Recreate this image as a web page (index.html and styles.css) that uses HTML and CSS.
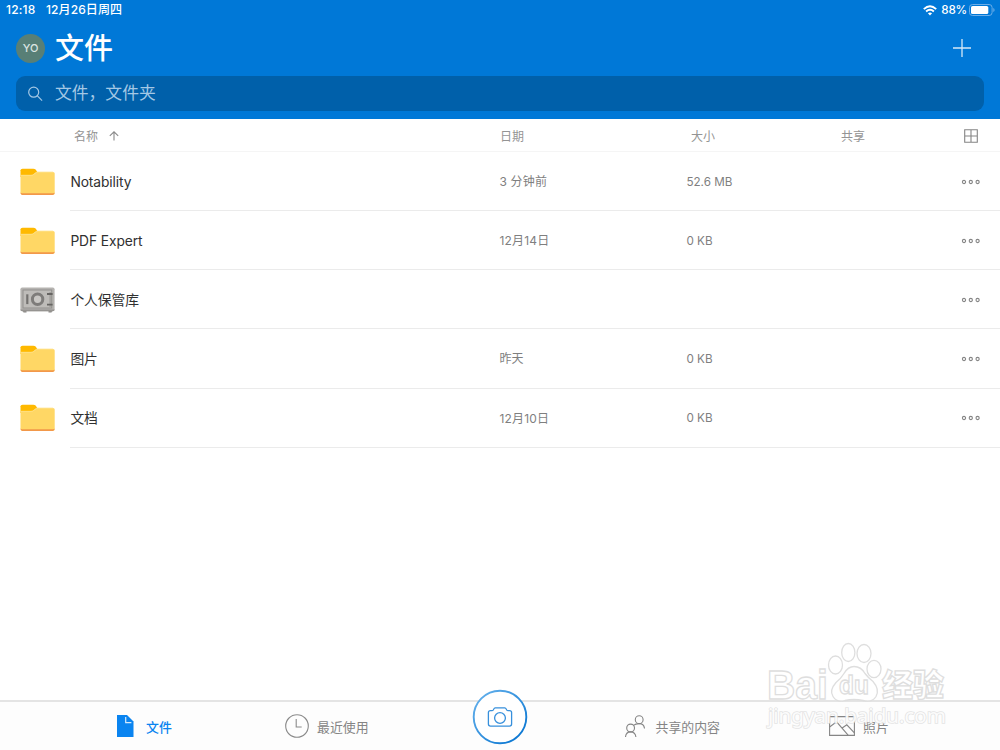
FILE: index.html
```html
<!DOCTYPE html>
<html lang="zh-CN">
<head>
    <meta charset="UTF-8">
    <meta name="viewport" content="width=device-width, initial-scale=1.0">
    <title>文件</title>
    <link rel="stylesheet" href="styles.css">
</head>
<body>
    <!-- Shared icons -->
    <svg class="symbols" width="0" height="0">
        <symbol id="folder" viewBox="0 0 36 28">
            <path d="M.5 3.2V9h13l4.5-4-2.2-3.2Q14.8.7 13.3.7H2.5Q.5.7.5 2.2z" fill="#ffb900"/>
            <path d="M.5 8.2Q.5 7.2 1.5 7.2H11q1.5 0 2.6-.9L16 4.6q.8-.6 2-.6h15q1.7 0 1.7 1.5V25q0 1.8-1.8 1.8H2.3Q.5 26.8.5 25z" fill="#ffd765"/>
            <path d="M.5 7.3H11q1.5 0 2.6-.9L16 4.6q.8-.6 2-.6h15" fill="none" stroke="#ffe69a" stroke-width=".8"/>
            <path d="M.5 24.5q.4.7 1.8.7h30.6q1.4 0 1.8-.7 0 2.4-1.8 2.4H2.300q-1.800 0-1.800-2.400z" fill="#f2984a"/>
        </symbol>
        <symbol id="more" viewBox="0 0 20 6">
            <g fill="none" stroke="#858585" stroke-width="1.1">
                <circle cx="3" cy="3" r="1.6"/>
                <circle cx="9.8" cy="3" r="1.6"/>
                <circle cx="16.6" cy="3" r="1.6"/>
            </g>
        </symbol>
    </svg>

    <!-- Header -->
    <header>
        <div class="status-bar">
            <span class="time">12:18</span>
            <span class="day">12月26日周四</span>
            <svg class="wifi" width="14" height="11" viewBox="0 0 14 11">
                <g fill="none" stroke="#fff" stroke-width="1.9">
                    <path d="M.8 4.100Q7-1.700 13.200 4.100"/>
                    <path d="M3.100 6.500Q7 3 10.900 6.500"/>
                </g>
                <path d="M4.900 8.300Q7 6.600 9.100 8.300L7 10.500z" fill="#fff"/>
            </svg>
            <span class="percent">88%</span>
            <svg width="26" height="12" viewBox="0 0 26 12">
                <rect x=".5" y=".5" width="22.6" height="11" rx="3" fill="none" stroke="#6caee8"/>
                <rect x="2" y="2" width="17.3" height="8" rx="1.6" fill="#fff"/>
                <path d="M24.300 4q1.300.6 1.300 2t-1.300 2z" fill="#6caee8"/>
            </svg>
        </div>
        <div class="title-bar">
            <div class="avatar">YO</div>
            <h1>文件</h1>
            <svg class="add" width="18" height="18" viewBox="0 0 18 18">
                <path d="M9 0v18M0 9h18" stroke="#d5e8f8" stroke-width="1.3"/>
            </svg>
        </div>
        <div class="search">
            <svg width="16" height="16" viewBox="0 0 16 16">
                <g fill="none" stroke="#a4c8e5" stroke-width="1.2">
                    <circle cx="6.7" cy="6.2" r="5"/>
                    <path d="M10.400 9.900l4.700 4.700"/>
                </g>
            </svg>
            <span>文件，文件夹</span>
        </div>
    </header>

    <!-- File list -->
    <main>
        <div class="list-head">
            <div class="head-name">名称
                <svg width="10" height="10" viewBox="0 0 10 10">
                    <path d="M5 9.500V1M.8 4.900L5 .8l4.200 4.100" fill="none" stroke="#8a8a8a" stroke-width="1.1"/>
                </svg>
            </div>
            <div>日期</div>
            <div>大小</div>
            <div>共享</div>
            <svg width="14" height="14" viewBox="0 0 14 14">
                <path d="M.7.7h12.600v12.600H.7zM7 .7v12.600M.7 7h12.600" fill="none" stroke="#858585" stroke-width="1.1"/>
            </svg>
        </div>

        <div class="row">
            <svg class="icon" width="36" height="28"><use href="#folder"/></svg>
            <div class="info">
                <div class="name">Notability</div>
                <div class="date">3 分钟前</div>
                <div class="size">52.6 MB</div>
                <svg class="more" width="20" height="6"><use href="#more"/></svg>
            </div>
        </div>
        <div class="row">
            <svg class="icon" width="36" height="28"><use href="#folder"/></svg>
            <div class="info">
                <div class="name">PDF Expert</div>
                <div class="date">12月14日</div>
                <div class="size">0 KB</div>
                <svg class="more" width="20" height="6"><use href="#more"/></svg>
            </div>
        </div>
        <div class="row">
            <svg class="icon" width="36" height="28" viewBox="0 0 36 28">
                <path d="M2.500 24h4v2.500h-3zM28.500 24h4l-1 2.500h-3z" fill="#858381"/>
                <rect x=".4" y="1.5" width="34.2" height="23.8" rx="1.8" fill="#b5b3b0"/>
                <path d="M.4 23.500h34.200q0 1.800-1.800 1.800H2.200q-1.800 0-1.800-1.800z" fill="#969491"/>
                <rect x="3" y="4" width="28.7" height="18" fill="#bebcb9" stroke="#92908d"/>
                <circle cx="17.6" cy="13.2" r="5.2" fill="#c9c7c4" stroke="#7e7c7a" stroke-width="3"/>
                <path d="M7.300 8.300v9.800" stroke="#73716f" stroke-width="2.2"/>
                <path d="M30.100 6v15" stroke="#92908d"/>
                <path d="M27 8h5.600M27 18.700h5.600" stroke="#666462" stroke-width="1.8"/>
            </svg>
            <div class="info">
                <div class="name">个人保管库</div>
                <div></div>
                <div></div>
                <svg class="more" width="20" height="6"><use href="#more"/></svg>
            </div>
        </div>
        <div class="row">
            <svg class="icon" width="36" height="28"><use href="#folder"/></svg>
            <div class="info">
                <div class="name">图片</div>
                <div class="date">昨天</div>
                <div class="size">0 KB</div>
                <svg class="more" width="20" height="6"><use href="#more"/></svg>
            </div>
        </div>
        <div class="row">
            <svg class="icon" width="36" height="28"><use href="#folder"/></svg>
            <div class="info">
                <div class="name">文档</div>
                <div class="date">12月10日</div>
                <div class="size">0 KB</div>
                <svg class="more" width="20" height="6"><use href="#more"/></svg>
            </div>
        </div>
    </main>

    <!-- Tab bar -->
    <nav>
        <div class="tab tab-files active">
            <svg width="17" height="22" viewBox="0 0 17 22">
                <path d="M0 0h10l6.500 6.500V22H0z" fill="#0a84f0"/>
                <path d="M8.700 2v5.700h5.700" fill="none" stroke="#d6eafc" stroke-width="1.2"/>
            </svg>
            <span>文件</span>
        </div>
        <div class="tab tab-recent">
            <svg width="24" height="24" viewBox="0 0 24 24">
                <g fill="none" stroke="#8a8a8a" stroke-width="1.1">
                    <circle cx="12" cy="12" r="11.3"/>
                    <path d="M11.200 5v8h5.500"/>
                </g>
            </svg>
            <span>最近使用</span>
        </div>
        <div class="tab tab-camera">
            <svg width="56" height="56" viewBox="0 0 56 56">
                <defs>
                    <linearGradient id="ring" x1="0" y1="0" x2="1" y2="1">
                        <stop offset="0" stop-color="#6ab4ed"/>
                        <stop offset="1" stop-color="#0070cf"/>
                    </linearGradient>
                </defs>
                <circle cx="28" cy="28" r="26.3" fill="#fff" stroke="url(#ring)" stroke-width="1.9"/>
                <g fill="none" stroke="#3790dc" stroke-width="1.3">
                    <path d="M18.500 21.600h1.700q1 0 1.300-1l.3-.7q.4-1.100 1.500-1.100h9.400q1.100 0 1.500 1.100l.3.700q.3 1 1.300 1h1.700q2.100 0 2.100 2v11.500q0 2.100-2.100 2.100h-19q-2.100 0-2.100-2.100V23.600q0-2 2.100-2z"/>
                    <circle cx="28" cy="29" r="5.4"/>
                </g>
            </svg>
        </div>
        <div class="tab tab-shared">
            <svg width="20" height="23" viewBox="0 0 20 23">
                <g fill="none" stroke="#858585" stroke-width="1.1">
                    <circle cx="14.2" cy="4.7" r="3.9"/>
                    <circle cx="5.6" cy="13" r="3.9"/>
                    <path d="M.5 22q.4-5.100 5.100-5.100t5.300 5.100M8.500 10.300q2-1.700 5.700-1.700 4.800 0 5.300 4.900"/>
                </g>
            </svg>
            <span>共享的内容</span>
        </div>
        <div class="tab tab-photos">
            <svg width="26" height="20" viewBox="0 0 26 20">
                <g fill="none" stroke="#858585" stroke-width="1.1">
                    <path d="M.6.600h24.800v18.800H.6z"/>
                    <path d="M.6 11l7-5.200 11.700 13.600M12.800 12.200l5-3.400 7.600 8"/>
                </g>
            </svg>
            <span>照片</span>
        </div>
    </nav>

    <!-- Watermark -->
    <svg class="watermark" width="190" height="94" viewBox="0 0 190 94">
        <g class="mark">
            <text class="latin" x="2" y="59" font-size="41" textLength="61" lengthAdjust="spacingAndGlyphs">Bai</text>
            <ellipse cx="70.5" cy="25" rx="7" ry="9"/>
            <ellipse cx="83.3" cy="12.5" rx="6.6" ry="9"/>
            <ellipse cx="99" cy="13.5" rx="7" ry="9"/>
            <ellipse cx="109" cy="29" rx="7" ry="8.7"/>
            <path d="M89 26.500q-6 0-10 7-3 5-8 9-7 8-3 14 4 6.500 12 4 9-2 18 0 9 2.500 13-4 4-7-3-15-5-4-8-8-4-7-11-7z"/>
            <text class="latin" x="74" y="54" font-size="26" textLength="30" lengthAdjust="spacingAndGlyphs">du</text>
            <text class="han" x="117" y="56" font-size="31" textLength="62" lengthAdjust="spacingAndGlyphs">经验</text>
            <text class="url" x="3" y="83" font-size="20" textLength="178" lengthAdjust="spacingAndGlyphs">jingyan.baidu.com</text>
        </g>
    </svg>
</body>
</html>
```
FILE: styles.css
```css
* {
    box-sizing: border-box;
}
body {
    font-family: Inter, "Noto Sans CJK SC", sans-serif;
    margin: 0;
    height: 750px;
    display: flex;
    flex-direction: column;
    overflow: hidden;
    position: relative;
    background-color: #ffffff;
    color: #303030;
}
svg {
    display: block;
    flex: none;
}
.symbols {
    position: absolute;
}

/* Header */
header {
    height: 119px;
    flex: none;
    background-color: #0078d7; /* Blue */
    color: white;
}
.status-bar {
    height: 20px;
    display: flex;
    align-items: center;
    padding: 0 5px 0 6px;
    font-size: 12px;
    font-weight: 500;
    line-height: 20px;
}
.time {
    width: 40px;
    letter-spacing: 0.2px;
}
.day {
    letter-spacing: 0.1px;
}
.wifi {
    margin-left: auto;
    margin-right: 4px;
}
.percent {
    margin-right: 2px;
    font-size: 11.7px;
    letter-spacing: -0.2px;
}
.title-bar {
    height: 56px;
    display: flex;
    align-items: center;
    padding: 0 29px 0 16px;
}
.avatar {
    width: 29px;
    height: 29px;
    border-radius: 50%;
    background-color: #587f76;
    color: #dbe5e2;
    font-size: 11px;
    font-weight: 500;
    line-height: 29px;
    text-align: center;
}
h1 {
    margin: 0 0 0 10px;
    padding-top: 2px;
    font-size: 29px;
    font-weight: 500;
    line-height: 40px;
}
.add {
    margin-left: auto;
}
.search {
    height: 35px;
    margin: 0 16px;
    padding-left: 11px;
    display: flex;
    align-items: center;
    gap: 12px;
    border-radius: 9px;
    background-color: #0060aa;
    color: #a4c8e5;
    font-size: 16.8px;
    line-height: 34px;
}
.search span {
    padding-bottom: 1px;
}

/* File list */
main {
    flex: 1;
}
.list-head {
    height: 33px;
    display: grid;
    grid-template-columns: 426px 191px 150px 122.5px 14px;
    align-items: center;
    padding-left: 74px;
    padding-top: 1px;
    border-bottom: 1px solid #f5f5f5;
    color: #949494;
    font-size: 12px;
}
.head-name {
    display: flex;
    align-items: center;
    gap: 11px;
}
.row {
    height: 59.15px;
    display: flex;
    padding-left: 19.6px;
}
.icon {
    align-self: center;
}
.info {
    flex: 1;
    margin-left: 14.8px;
    display: grid;
    grid-template-columns: 429px 187px 1fr 20px;
    align-items: center;
    padding-right: 19px;
    border-bottom: 1px solid #ebebeb;
    color: #7f7f7f;
    font-size: 12px;
    line-height: 18px;
}
.date {
    padding-top: 2px;
    letter-spacing: 0.2px;
}
.size {
    padding-top: 1px;
    font-size: 11.7px;
}
.more {
    grid-column: 4;
    margin-top: 1px;
}
.name {
    padding-top: 1px;
    color: #303030;
    font-size: 13.8px;
    line-height: 20px;
    letter-spacing: -0.1px;
}

/* Tab bar */
nav {
    height: 50px;
    flex: none;
    display: grid;
    grid-template-columns: repeat(5, 200px);
    border-top: 2px solid #e4e4e4;
    background-color: #fdfdfd;
}
.tab {
    display: flex;
    align-items: center;
    height: 48px;
    color: #858585;
    font-size: 12.9px;
}
.active {
    color: #0a84f0;
    font-weight: 500;
}
.tab-files {
    padding-left: 117px;
    gap: 12px;
}
.tab-recent {
    padding-left: 85px;
    gap: 8px;
}
.tab-camera {
    height: 56px;
    margin-top: -13px;
    justify-content: center;
}
.tab-shared {
    padding-left: 25px;
    gap: 10.5px;
}
.tab-photos {
    padding-left: 29px;
    gap: 8px;
}

/* Watermark lies over the page */
.watermark {
    position: absolute;
    left: 765px;
    top: 640px;
}
.mark {
    fill: #ffffff;
    fill-opacity: 0.6;
    stroke: #dedede;
    stroke-width: 1.3;
}
.latin {
    font-family: "Liberation Sans", sans-serif;
    font-weight: 700;
}
.han {
    font-family: "Noto Sans CJK SC", sans-serif;
    font-weight: 900;
}
.url {
    font-family: "Noto Sans", sans-serif;
    font-weight: 400;
    fill-opacity: 0.9;
    stroke: #d8d8d8;
    stroke-opacity: 0.7;
    stroke-width: 1.6;
    paint-order: stroke;
}
```
